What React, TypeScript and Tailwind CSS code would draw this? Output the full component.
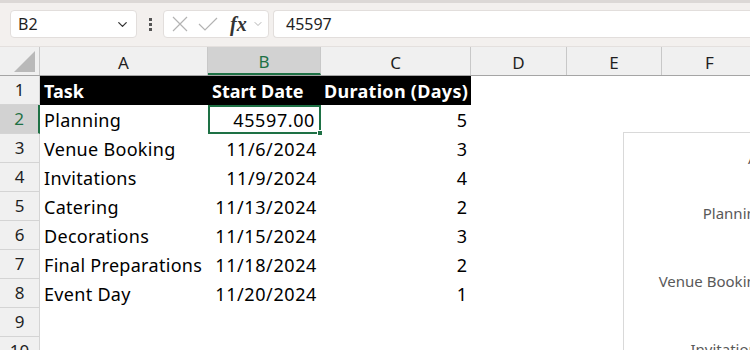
import { ChevronDown } from "lucide-react";

const font = { fontFamily: '"Noto Sans", "Liberation Sans", sans-serif' };

const columns = [
  { key: "A", width: "w-[168px]" },
  { key: "B", width: "w-[113px]" },
  { key: "C", width: "w-[150px]" },
  { key: "D", width: "w-[96px]" },
  { key: "E", width: "w-[95px]" },
  { key: "F", width: "w-[96px]" },
];

const rows = [
  { task: "Planning", start: "45597.00", days: "5" },
  { task: "Venue Booking", start: "11/6/2024", days: "3" },
  { task: "Invitations", start: "11/9/2024", days: "4" },
  { task: "Catering", start: "11/13/2024", days: "2" },
  { task: "Decorations", start: "11/15/2024", days: "3" },
  { task: "Final Preparations", start: "11/18/2024", days: "2" },
  { task: "Event Day", start: "11/20/2024", days: "1" },
];

function RowHeader({ n, active }: { n: number; active?: boolean }) {
  return (
    <div
      className={
        "flex h-full w-[40px] shrink-0 items-center justify-center border-b border-r border-[#d4d4d4] text-[17px] " +
        (active ? "border-r-2 border-r-[#1e7145] bg-[#d2d2d2] text-[#1e7145]" : "bg-[#f0f0f0] text-[#1f1f1f]")
      }
    >
      {n}
    </div>
  );
}

export default function App() {
  return (
    <div className="relative h-[350px] w-[750px] overflow-hidden bg-white" style={font}>
      {/* formula bar */}
      <div className="h-[3px] bg-[#dcd8d6]" />
      <div className="flex h-[43px] items-start bg-[#f3f0ee] pt-[7px]">
        <div className="ml-[10px] flex h-[28px] w-[127px] items-center justify-between rounded-[4px] border border-[#e2dedc] bg-white pl-[7px] pr-[6px] text-[16px] text-[#1f1f1f]">
          <span>B2</span>
          <ChevronDown className="h-[15px] w-[15px] text-[#333]" strokeWidth={2} />
        </div>
        <div className="flex h-[28px] w-[26px] flex-col items-center justify-center gap-[2px]">
          <span className="h-[3px] w-[3px] bg-[#555]" />
          <span className="h-[3px] w-[3px] bg-[#555]" />
          <span className="h-[3px] w-[3px] bg-[#555]" />
        </div>
        <div className="flex h-[28px] w-[106px] items-center rounded-[4px] border border-[#e2dedc] bg-white pl-[8px]">
          <svg width="16" height="16" viewBox="0 0 16 16" className="text-[#b3b3b3]">
            <path d="M1 1 L15 15 M15 1 L1 15" stroke="currentColor" strokeWidth="1.2" fill="none" />
          </svg>
          <svg width="20" height="14" viewBox="0 0 20 14" className="ml-[10px] text-[#b3b3b3]">
            <path d="M1 7 L7 13 L19 1" stroke="currentColor" strokeWidth="1.2" fill="none" />
          </svg>
          <span
            className="ml-[12px] text-[20px] font-bold italic leading-none text-[#333]"
            style={{ fontFamily: '"Liberation Serif", serif' }}
          >
            fx
          </span>
          <ChevronDown className="ml-[5px] h-[12px] w-[12px] text-[#999]" strokeWidth={1.5} />
        </div>
        <div className="ml-[4px] flex h-[28px] flex-1 items-center rounded-l-[4px] border border-r-0 border-[#e2dedc] bg-white pl-[12px] text-[16px] text-[#1f1f1f]">
          45597
        </div>
      </div>
      <div className="h-px bg-[#e4e0de]" />

      {/* column headers */}
      <div className="flex h-[29px] border-b border-[#a5a5a5] bg-[#f0f0f0]">
        <div className="relative w-[40px] shrink-0 border-r border-[#c8c8c8]">
          <div
            className="absolute bottom-[3px] right-[4px] h-[21px] w-[21px] bg-[#b9b9b9]"
            style={{ clipPath: "polygon(100% 0, 100% 100%, 0 100%)" }}
          />
        </div>
        {columns.map((c) => (
          <div
            key={c.key}
            className={
              c.width +
              " flex shrink-0 items-center justify-center border-r border-[#c8c8c8] pt-[3px] text-[17px] " +
              (c.key === "B"
                ? "border-b-2 border-b-[#1e7145] bg-[#d2d2d2] text-[#1e7145]"
                : "text-[#1f1f1f]")
            }
          >
            {c.key}
          </div>
        ))}
      </div>

      {/* row 1 header */}
      <div className="flex h-[29px]">
        <RowHeader n={1} />
        <div className="flex w-[431px] items-center whitespace-nowrap bg-black pt-[2px] text-[18px] font-bold text-white">
          <div className="w-[168px] shrink-0 pl-[4px]">Task</div>
          <div className="w-[113px] shrink-0 pl-[4px]">Start Date</div>
          <div className="w-[150px] shrink-0 pl-[3px] tracking-[0.3px]">Duration (Days)</div>
        </div>
      </div>

      {rows.map((r, i) => (
        <div key={r.task} className="flex h-[29px] whitespace-nowrap">
          <RowHeader n={i + 2} active={i === 0} />
          <div className="flex w-[168px] shrink-0 items-center pl-[4px] pt-[2px] text-[18px] tracking-[0.3px] text-black">
            {r.task}
          </div>
          <div
            className={
              "relative flex w-[113px] shrink-0 items-center justify-end pr-[4px] pt-[2px] text-[18px] tracking-[0.6px] text-black " +
              (i === 0 ? "border-2 border-[#1e7145] pr-[2px]" : "")
            }
          >
            {r.start}
            {i === 0 && (
              <span className="absolute bottom-[-4px] right-[-4px] h-[6px] w-[6px] border border-white bg-[#1e7145]" />
            )}
          </div>
          <div className="flex w-[150px] shrink-0 items-center justify-end pr-[4px] pt-[2px] text-[18px] text-black">
            {r.days}
          </div>
        </div>
      ))}

      <div className="flex h-[29px]">
        <RowHeader n={9} />
      </div>
      <div className="flex h-[29px]">
        <RowHeader n={10} />
      </div>

      {/* floating chart */}
      <div className="absolute left-[623px] top-[132px] h-[260px] w-[200px] border border-[#d9d9d9] bg-white text-[15px] text-[#595959]">
        <div className="absolute left-[124px] top-[14px]">Activity</div>
        <div className="flex w-[141px] flex-col items-end pt-[68px]">
          <div className="h-[68px] leading-[24px]">Planning</div>
          <div className="h-[68px] leading-[24px]">Venue Booking</div>
          <div className="h-[68px] leading-[24px]">Invitations</div>
        </div>
      </div>
    </div>
  );
}
